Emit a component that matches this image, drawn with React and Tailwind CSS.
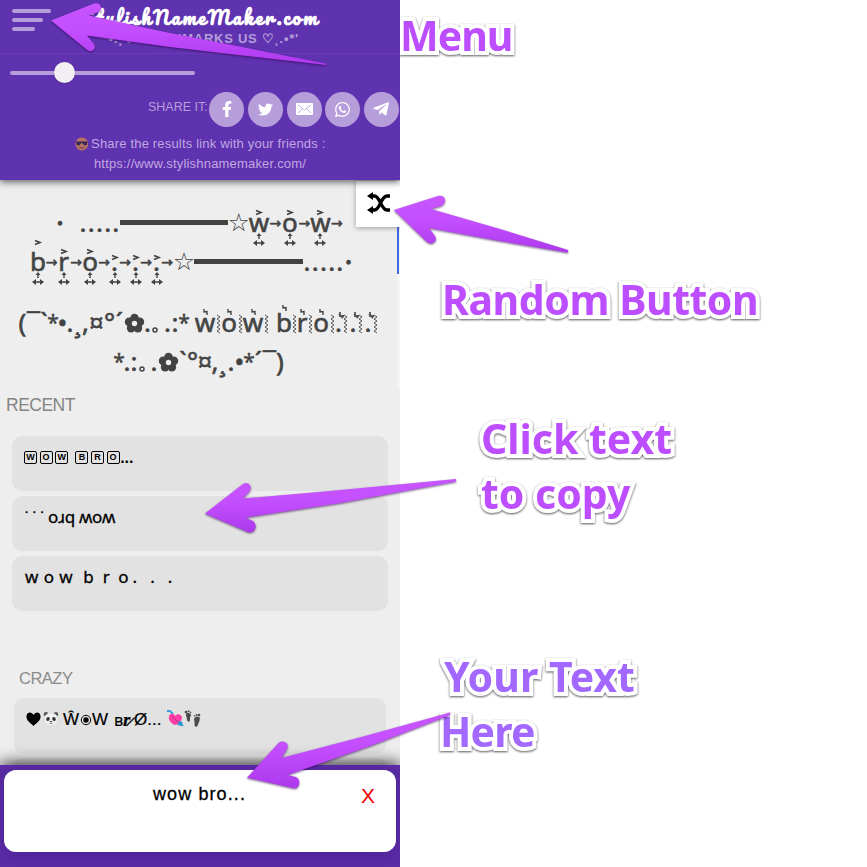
import React from "react";
import { FaFacebookF, FaTwitter, FaWhatsapp, FaTelegramPlane } from "react-icons/fa";

const ARIAL = "font-['Liberation_Sans',Arial,sans-serif]";
const NOTO = "font-['Noto_Sans','DejaVu_Sans',sans-serif]";

/* Decorated glyph rows: [glyph, right edge, kind] */
const dots = (from) => [1, 2, 3, 4, 5].map((i) => [".", from + i * 8.2]);
const ROW1 = [
  ["·", 65, "big"], ["", 79], ...dots(79), ["", 228.5, "bar"], ["☆", 249, "star"],
  ["w", 269, "up"], ["→", 282, "arrow"], ["o", 298, "up"], ["→", 311, "arrow"],
  ["w", 330, "up"], ["→", 344, "arrow"],
];
const ROW2 = [
  ["b", 45, "tall"], ["→", 58, "arrow"], ["r", 69, "up"], ["→", 83, "arrow"], ["o", 97, "up"],
  ["→", 111, "arrow"], [".", 118, "dot"], ["→", 132, "arrow"], [".", 139, "dot"], ["→", 153, "arrow"],
  [".", 160, "dot"], ["→", 174, "arrow"], ["☆", 194, "star"], ["", 303, "bar"], ...dots(303), ["·", 353, "big"],
];
const ROW3 = [
  ["(", 27], ["¯", 40], ["`", 48], ["*", 58, "ast"], ["•", 67], [".", 73], ["¸", 82], [",", 89], ["¤", 104],
  ["°", 115], ["´", 124], ["", 144, "flower"], [".", 151], ["", 160, "ring"], ["", 164], [".", 171], [":", 179], ["*", 189, "ast"],
  ["", 195], ["w", 215, "bolt"], ["", 221, "zig"], ["o", 237, "bolt"], ["", 243, "zig"], ["w", 263, "bolt"],
  ["", 269, "zig"], ["", 277], ["b", 291, "boltTall"], ["", 297, "zig"], ["r", 307, "bolt"], ["", 313, "zig"],
  ["o", 329, "bolt"], ["", 335, "zig"], [".", 342], ["", 349, "zigHook"], [".", 357], ["", 364, "zigHook"],
  [".", 372], ["", 379, "zigHook"],
];
const ROW4 = [
  ["*", 124, "ast"], [".", 130], [":", 138], ["", 146, "ring"], ["", 150], [".", 158], ["", 179, "flower"], ["`", 187],
  ["°", 198], ["¤", 212], [",", 218], ["¸", 227], [".", 235], ["•", 244], ["*", 254, "ast"], ["´", 263], ["¯", 276], [")", 284],
];

const SIZE = {
  big: "text-[26px] [-webkit-text-stroke:1.4px_#434343]",
  star: "text-[25px] font-['DejaVu_Sans',sans-serif]",
  arrow: "pt-[1px] text-[14px] [-webkit-text-stroke:0.5px_#434343] font-['DejaVu_Sans',sans-serif]",
  ast: "text-[21px] [-webkit-text-stroke:0.4px_#434343]",
};
const TOP = { up: 7.5, tall: -2, dot: 13 };

function Glyph({ g, width, kind }) {
  const size = SIZE[kind] || "text-[26px] [-webkit-text-stroke:0.6px_#434343]";
  return (
    <span className="relative flex h-[39px] shrink-0 justify-center" style={{ width }}>
      {kind === "bar" ? (
        <span className="mt-[14px] h-[4.5px] w-full bg-[#434343]" />
      ) : kind === "flower" ? (
        <svg className="mt-[7px] shrink-0" width="21" height="20" viewBox="-10.5 -10.5 21 20">
          <g fill="#434343">
            <circle cy="-5.5" r="4.3" /><circle cx="5.4" cy="-1.6" r="4.3" /><circle cx="3.4" cy="4.6" r="4.3" />
            <circle cx="-3.4" cy="4.6" r="4.3" /><circle cx="-5.4" cy="-1.6" r="4.3" /><circle r="4" />
          </g>
          <circle r="2.7" fill="#eeeeee" />
        </svg>
      ) : kind === "zig" || kind === "zigHook" ? (
        <svg className="absolute left-0 top-[9px] overflow-visible" width="7" height="19" fill="none" stroke="#555" strokeWidth="1">
          <path d="M2 0l3 2-3 2 3 2-3 2 3 2-3 2 3 2-3 2 3 2" />
          {kind === "zigHook" && <path strokeWidth="1.8" d="M-3-1l4 4M-2-3v4l4 0" />}
        </svg>
      ) : kind === "ring" ? (
        <svg className="absolute left-[1px] top-[21px] overflow-visible" width="6" height="6" fill="none" stroke="#434343" strokeWidth="1.5"><circle cx="3" cy="3" r="2" /></svg>
      ) : (
        <span className={`whitespace-pre leading-[33px] ${size}`}>{g}</span>
      )}
      {TOP[kind] !== undefined && (
        <>
          <svg className="absolute left-1/2 -ml-[3px] overflow-visible" style={{ top: TOP[kind] - 3.5 }} width="6" height="5" fill="none" stroke="#434343" strokeWidth="1.6"><path d="M0 .5l5 2-5 2" /></svg>
          <svg className="absolute left-1/2 top-[27px] -ml-[6px]" width="12" height="13" fill="#434343">
            <path d="M6 0l2.5 3H6.7v3H5.3V3H3.5zM0 10l4-3v2.2h4V7l4 3-4 3v-2.2H4V13z" />
          </svg>
        </>
      )}
      {(kind === "bolt" || kind === "boltTall") && (
        <svg className={kind === "bolt" ? "absolute left-1/2 top-[3px] -ml-[2px]" : "absolute left-1/2 -top-[1px] -ml-[2px]"} width="5" height="7" fill="none" stroke="#434343" strokeWidth="1.4"><path d="M1 0v3l3-.5v3.5" /></svg>
      )}
    </span>
  );
}

function GlyphRow({ start, cells }) {
  return (
    <div className={`flex h-[39px] text-[#434343] ${NOTO}`} style={{ paddingLeft: start }}>
      {cells.map(([g, end, kind], i) => (
        <Glyph key={i} g={g} kind={kind} width={end - (i ? cells[i - 1][1] : start)} />
      ))}
    </div>
  );
}

function ShareButton({ children }) {
  return <div className="flex size-[35px] shrink-0 items-center justify-center rounded-full bg-[#b69edb] text-white">{children}</div>;
}

function Boxed({ c }) {
  return <span className="flex size-[13px] items-center justify-center rounded-[2px] border-[1.5px] border-black text-[9px] font-bold leading-none">{c}</span>;
}

function CoolFace() {
  return (
    <svg width="14" height="14" viewBox="0 0 14 14">
      <circle cx="7" cy="7" r="6.6" fill="#b87362" />
      <path d="M1 4.3h12l-.6 3.3q-2.4 2.3-4.3-.8l-.7-.8h-.8l-.7.8q-1.9 3.1-4.3.8z" fill="#38275c" />
      <path d="M4.5 10.5q2.5 1.5 5 0" fill="none" stroke="#643950" />
    </svg>
  );
}

function Panda() {
  return (
    <svg width="16" height="16" viewBox="0 0 16 16">
      <circle cx="3" cy="3.2" r="2.2" fill="#555" /><circle cx="13" cy="3.2" r="2.2" fill="#555" />
      <ellipse cx="8" cy="8.5" rx="7" ry="6.6" fill="#f0f0f0" stroke="#d0d0d0" strokeWidth=".5" />
      <ellipse cx="5" cy="8" rx="1.7" ry="2.1" fill="#333" transform="rotate(30 5 8)" />
      <ellipse cx="11" cy="8" rx="1.7" ry="2.1" fill="#333" transform="rotate(-30 11 8)" />
      <path d="M6.5 10h3L8 11.5zM6 12.5q2 1 4 0" fill="#333" />
    </svg>
  );
}

function ArrowHeart() {
  return (
    <svg width="17" height="17" viewBox="0 0 17 17">
      <path d="M0 1l3 0 3 3M16 16l-5-5" stroke="#3aa0dd" strokeWidth="2" fill="none" />
      <path d="M8 15C3 13 1 9 2 6c1-3 5-3 6 0 2-3 6-2 7 1 0 4-3 7-7 8z" fill="#fb3fa6" />
      <path d="M11.500 11l4 1-1 4-4-1z" fill="#2c93d3" />
      <path d="M5 6l6 6" stroke="#c81c7e" />
    </svg>
  );
}

function Feet() {
  return (
    <svg width="17" height="18" viewBox="0 0 17 18" fill="#4d4d4d">
      <path d="M2 3.500q3-2 5 1c0 2-1.500 3-1 5 .3 3-2.500 3-3 0 0-2-1.500-4-1-6z" />
      <path d="M15.500 7q-4-1.500-5.500 2c0 2 1 3 .5 5-.5 3 2.500 4 3.500 1 0-2 2.500-4 1.500-8z" />
      <circle cx="2" cy="2" r="1.300" /><circle cx="4.500" cy="1.300" r="1" /><circle cx="6.700" cy="2.200" r=".8" />
      <circle cx="15" cy="5" r="1.300" /><circle cx="12.500" cy="5" r="1" /><circle cx="10.500" cy="6" r=".8" />
    </svg>
  );
}

function Label({ className, children }) {
  return (
    <div className={`absolute whitespace-pre font-['Noto_Sans','Open_Sans',sans-serif] text-[41px] font-bold leading-[55px] [-webkit-text-stroke:8px_white] [paint-order:stroke_fill] [stroke-linejoin:round] [filter:drop-shadow(0_1px_0.8px_rgba(0,0,0,0.65))] ${className}`}>
      {children}
    </div>
  );
}

const ARROWS = [
  "M51 20.500L94 3.500Q100 2 101 7Q101 11 97 12.500L89 15.500L165 32L326 63.500V65L170 47L87 35.500L94 44Q96.500 49 92 51Q89 52 86 49Z",
  "M394 210L438 196Q444 195 445 200Q445 204 441 206L431 209L500 229L568 250V252.500L500 241L429 228L435 236Q437.500 241 433 243Q429 244.500 426 241Z",
  "M205 513.500L243 484Q248 481 250.500 486Q251.500 490 248 493L243 498.500L330 491L456 479V481.500L340 503L245 517.500L253 521Q257 524 255 529Q253 533 248 532Z",
  "M247 777.700L279 742.500Q283 740 287 743.500Q289 748 285 752L281.500 758L365 736L450 712.500V715L370 746L287.500 775L296 777Q300 779 299 784Q298 789 293 788Z",
];

export default function App() {
  return (
    <div className="relative h-[867px] w-[867px] overflow-hidden bg-white">
      <main className={`relative flex h-[867px] w-[400px] flex-col overflow-hidden bg-[#eeeeee] ${ARIAL}`}>
        <header className="z-10 flex h-[180px] shrink-0 flex-col bg-[#5f32b0] shadow-[0_2px_7px_rgba(0,0,0,0.6)]">
          <div className="flex h-[54px] border-b border-[#6a3bb4]">
            <div className="flex w-[72px] flex-col gap-[5px] pl-[12px] pt-[9px]">
              <i className="h-[4px] w-[39px] rounded-full bg-[#b69edb]" />
              <i className="h-[4px] w-[31px] rounded-full bg-[#b69edb]" />
              <i className="h-[4px] w-[23px] rounded-full bg-[#b69edb]" />
            </div>
            <div className="flex flex-col whitespace-pre pl-[9px] pt-[5px]">
              <h1 className="w-[245px] font-['Pacifico','Kaushan_Script','Lato',cursive] text-[18.500px] font-bold leading-[24px] tracking-[2.200px] text-white">StylishNameMaker.com</h1>
              <p className="pl-[18px] pt-px text-[13px] font-bold leading-[17px] tracking-[0.730px] text-[#b69edb]">{"'*•.¸♡ BOOKMARKS US ♡¸.•*'"}</p>
            </div>
          </div>
          <div className="flex h-[37px] items-center pl-[10px]">
            <div className="flex h-[4px] w-[185px] items-center rounded-full bg-[#b69edb] pl-[44px]">
              <i className="size-[21px] shrink-0 rounded-full bg-[#f1eff1] shadow-sm" />
            </div>
          </div>
          <div className="flex h-[36px] items-center gap-[3.700px] pl-[148px]">
            <span className="w-[57.500px] whitespace-nowrap pb-[4px] text-[12.500px] text-[#b69edb]">SHARE IT:</span>
            <ShareButton><FaFacebookF size={16} /></ShareButton>
            <ShareButton><FaTwitter size={15} /></ShareButton>
            <ShareButton><svg width="17" height="12" viewBox="0 0 17 12"><rect width="17" height="12" rx="1" fill="white" /><path d="M2 2l6.500 5L15 2M2 10l4-4M15 10l-4-4" fill="none" stroke="#b69edb" strokeWidth=".8" /></svg></ShareButton>
            <ShareButton><FaWhatsapp size={17} /></ShareButton>
            <ShareButton><FaTelegramPlane size={18} /></ShareButton>
          </div>
          <div className="flex flex-col items-center pt-[7px] text-[13px] leading-[19.500px] text-[#c0a8e0]">
            <p className="flex w-[251px] items-center gap-[3px] whitespace-nowrap tracking-[0.180px]"><CoolFace /> Share the results link with your friends :</p>
            <p className="tracking-[0.190px]">https://www.stylishnamemaker.com/</p>
          </div>
        </header>

        <section className="relative flex h-[208px] shrink-0 flex-col border-r-[3px] border-[#f5f5f5] pt-[26px]">
          <GlyphRow start={55} cells={ROW1} />
          <GlyphRow start={31} cells={ROW2} />
          <div className="h-[22px]" />
          <GlyphRow start={18} cells={ROW3} />
          <GlyphRow start={114} cells={ROW4} />
          <div className="absolute -right-[2px] top-[47px] h-[47px] w-[2px] bg-[#4169e1]" />
          <button className="absolute -right-[3px] top-[1px] flex h-[46px] w-[44px] items-center justify-center bg-white shadow-[0_1px_5px_rgba(0,0,0,0.35)]">
            <svg className="ml-[2px] mt-[-2px]" width="24" height="22" viewBox="0 0 24 22" fill="none" stroke="black" strokeWidth="3.300">
              <path d="M5 4h2.500C13 4 14 18 20 18h3M5 18h2.500C13 18 14 4 20 4h3" />
              <path d="M0 4l6-4v8zM0 18l6-4v8z" fill="black" stroke="none" />
            </svg>
          </button>
        </section>

        <h2 className="h-[48px] shrink-0 pl-[6px] pt-[6px] text-[17.500px] leading-[22px] tracking-[-0.500px] text-[#858585]">RECENT</h2>
        <div className="flex shrink-0 flex-col gap-[5px] px-[12px]">
          <div className="flex h-[55px] items-start gap-[2.600px] rounded-[10px] bg-[#e2e2e2] pl-[12px] pt-[15px]">
            <Boxed c="W" /><Boxed c="O" /><Boxed c="W" /><span className="w-[2px]" /><Boxed c="B" /><Boxed c="R" /><Boxed c="O" />
            <span className="ml-[-2px] text-[16px] font-bold leading-[14px]">...</span>
          </div>
          <div className={`flex h-[55px] rounded-[10px] bg-[#e2e2e2] pl-[13px] pt-[9px] text-[17px] leading-[24px] [-webkit-text-stroke:0.3px_black] ${NOTO}`}>
            <span className="w-[23px] tracking-[4.600px]">˙˙˙</span><span className="tracking-[-0.300px]">oɹq ʍoʍ</span>
          </div>
          <div className={`h-[55px] whitespace-pre rounded-[10px] bg-[#e2e2e2] pl-[13px] pt-[9px] text-[17px] leading-[24px] [-webkit-text-stroke:0.3px_black] ${NOTO}`}>
            <span className="tracking-[5.500px]">wow</span><span className="pl-[5px] tracking-[9px]">bro</span><span className="ml-[-5px] tracking-[13px]">...</span>
          </div>
        </div>
        <h2 className="mt-[57px] h-[30px] shrink-0 pl-[19px] text-[16.500px] leading-[21px] tracking-[-0.500px] text-[#8b8b8b]">CRAZY</h2>
        <div className="mx-[14px] flex h-[56px] shrink-0 items-start rounded-[10px] bg-[#e2e2e2] pl-[12px] pt-[12px] text-[17px] leading-[20px] [-webkit-text-stroke:0.200px_black]">
          <svg className="mt-[2px]" width="15" height="15" viewBox="0 0 15 15"><path d="M7.500 14C3 10 0 8 .5 4 1-.5 6-.5 7.500 3 9-.5 14-.5 14.500 4c.5 4-2.500 6-7 10z" /></svg>
          <span className="ml-[2px] mt-px flex"><Panda /></span>
          <span className="ml-[4px]">Ŵ</span>
          <svg className="ml-px mt-[4px]" width="12" height="12"><circle cx="6" cy="6" r="4.700" fill="none" stroke="black" /><circle cx="6" cy="6" r="2.700" /></svg>
          <span className="w-[22px]">W</span>
          <span className={`w-[9px] text-[16px] ${NOTO}`}>ʙ</span>
          <span className="w-[11px] font-['Liberation_Serif'] text-[19px] font-bold italic">r̷</span>
          <span className="w-[33px]">Ø...</span><ArrowHeart /><Feet />
        </div>
        <div className="mx-[14px] mt-[4px] h-[7px] shrink-0 rounded-t-[10px] bg-[#e2e2e2]" />
        <footer className="z-10 h-[102px] shrink-0 bg-[#5a2ca5] px-[4px] pt-[5px] shadow-[0_-3px_14px_rgba(0,0,0,0.7)]">
          <div className="flex h-[82px] rounded-[12px] bg-white pl-[149px] pt-[13px] leading-[22px] shadow-[0_2px_12px_rgba(50,15,110,0.35)]">
            <span className="w-[208px] text-[18px] tracking-[1.100px] [-webkit-text-stroke:0.300px_black]">wow bro...</span>
            <span className="pt-[2px] text-[21px] text-[#f00000]">X</span>
          </div>
        </footer>
      </main>

      <Label className="left-[400px] top-[8px] tracking-[-1px] text-[#bd4eff]">Menu</Label>
      <Label className="left-[442px] top-[272px] tracking-[-0.450px] text-[#bd4eff]">Random Button</Label>
      <Label className="left-[481px] top-[411px] text-[#bd4eff]">{"Click text\nto copy"}</Label>
      <Label className="left-[444px] top-[649px] text-[#a268ff]">Your Text</Label>
      <Label className="left-[440px] top-[704px] tracking-[-0.800px] text-[#a268ff]">Here</Label>
      <svg className="pointer-events-none absolute inset-0 z-20 [filter:drop-shadow(0_1px_1px_rgba(45,0,75,0.65))]" width="867" height="867">
        <defs>
          <linearGradient id="violet" x1="0" y1="0" x2="0" y2="1">
            <stop offset="0" stopColor="#c855ff" /><stop offset=".45" stopColor="#c34eff" /><stop offset="1" stopColor="#ae38ed" />
          </linearGradient>
        </defs>
        {ARROWS.map((d) => <path key={d} d={d} fill="url(#violet)" />)}
      </svg>
    </div>
  );
}
